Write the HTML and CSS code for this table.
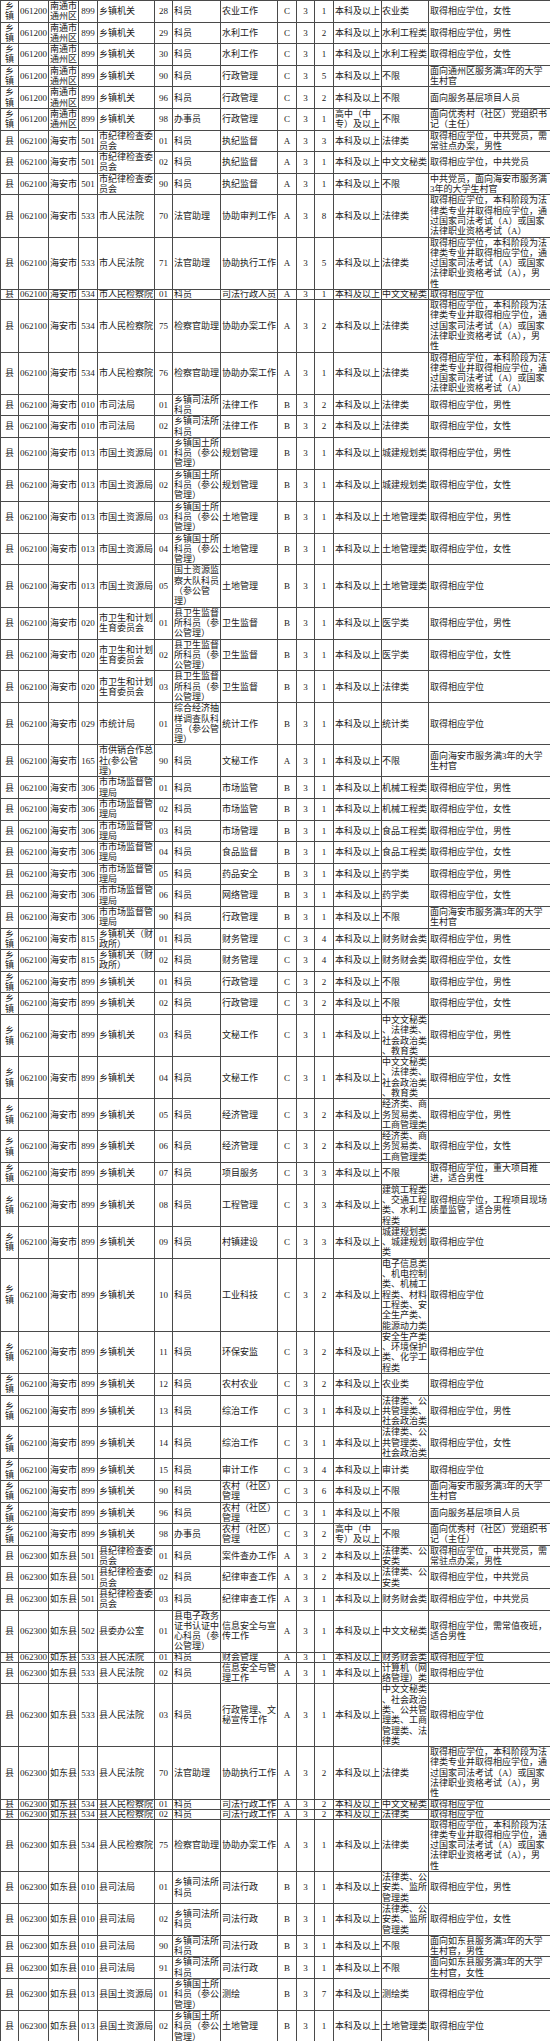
FILE: index.html
```html
<!DOCTYPE html>
<html lang="zh-CN">
<head>
<meta charset="utf-8">
<title>职位表</title>
<link rel="stylesheet" href="styles.css">
</head>
<body>
<table class="sheet">
<colgroup>
<col class="w1"><col class="w2"><col class="w3"><col class="w4"><col class="w5"><col class="w6"><col class="w7"><col class="w8"><col class="w9"><col class="w10"><col class="w11"><col class="w12"><col class="w13"><col class="w14">
</colgroup>
<tbody>
<tr><td>乡<br>镇</td><td>061200</td><td>南通市<br>通州区</td><td>899</td><td>乡镇机关</td><td>28</td><td>科员</td><td>农业工作</td><td>C</td><td>3</td><td>1</td><td>本科及以上</td><td>农业类</td><td>取得相应学位，女性</td></tr>
<tr><td>乡<br>镇</td><td>061200</td><td>南通市<br>通州区</td><td>899</td><td>乡镇机关</td><td>29</td><td>科员</td><td>水利工作</td><td>C</td><td>3</td><td>2</td><td>本科及以上</td><td>水利工程类</td><td>取得相应学位，男性</td></tr>
<tr><td>乡<br>镇</td><td>061200</td><td>南通市<br>通州区</td><td>899</td><td>乡镇机关</td><td>30</td><td>科员</td><td>水利工作</td><td>C</td><td>3</td><td>1</td><td>本科及以上</td><td>水利工程类</td><td>取得相应学位，女性</td></tr>
<tr><td>乡<br>镇</td><td>061200</td><td>南通市<br>通州区</td><td>899</td><td>乡镇机关</td><td>90</td><td>科员</td><td>行政管理</td><td>C</td><td>3</td><td>5</td><td>本科及以上</td><td>不限</td><td>面向通州区服务满3年的大学<br>生村官</td></tr>
<tr><td>乡<br>镇</td><td>061200</td><td>南通市<br>通州区</td><td>899</td><td>乡镇机关</td><td>96</td><td>科员</td><td>行政管理</td><td>C</td><td>3</td><td>2</td><td>本科及以上</td><td>不限</td><td>面向服务基层项目人员</td></tr>
<tr><td>乡<br>镇</td><td>061200</td><td>南通市<br>通州区</td><td>899</td><td>乡镇机关</td><td>98</td><td>办事员</td><td>行政管理</td><td>C</td><td>3</td><td>1</td><td>高中（中<br>专）及以上</td><td>不限</td><td>面向优秀村（社区）党组织书<br>记（主任）</td></tr>
<tr><td>县</td><td>062100</td><td>海安市</td><td>501</td><td>市纪律检查委<br>员会</td><td>01</td><td>科员</td><td>执纪监督</td><td>A</td><td>3</td><td>3</td><td>本科及以上</td><td>法律类</td><td>取得相应学位，中共党员，需<br>常驻点办案，男性</td></tr>
<tr><td>县</td><td>062100</td><td>海安市</td><td>501</td><td>市纪律检查委<br>员会</td><td>02</td><td>科员</td><td>执纪监督</td><td>A</td><td>3</td><td>1</td><td>本科及以上</td><td>中文文秘类</td><td>取得相应学位，中共党员</td></tr>
<tr><td>县</td><td>062100</td><td>海安市</td><td>501</td><td>市纪律检查委<br>员会</td><td>90</td><td>科员</td><td>执纪监督</td><td>A</td><td>3</td><td>1</td><td>本科及以上</td><td>不限</td><td>中共党员，面向海安市服务满<br>3年的大学生村官</td></tr>
<tr><td>县</td><td>062100</td><td>海安市</td><td>533</td><td>市人民法院</td><td>70</td><td>法官助理</td><td>协助审判工作</td><td>A</td><td>3</td><td>8</td><td>本科及以上</td><td>法律类</td><td>取得相应学位，本科阶段为法<br>律类专业并取得相应学位，通<br>过国家司法考试（A）或国家<br>法律职业资格考试（A）</td></tr>
<tr><td>县</td><td>062100</td><td>海安市</td><td>533</td><td>市人民法院</td><td>71</td><td>法官助理</td><td>协助执行工作</td><td>A</td><td>3</td><td>5</td><td>本科及以上</td><td>法律类</td><td>取得相应学位，本科阶段为法<br>律类专业并取得相应学位，通<br>过国家司法考试（A）或国家<br>法律职业资格考试（A），男<br>性</td></tr>
<tr class="thin"><td>县</td><td>062100</td><td>海安市</td><td>534</td><td>市人民检察院</td><td>01</td><td>科员</td><td>司法行政人员</td><td>A</td><td>3</td><td>1</td><td>本科及以上</td><td>中文文秘类</td><td>取得相应学位</td></tr>
<tr><td>县</td><td>062100</td><td>海安市</td><td>534</td><td>市人民检察院</td><td>75</td><td>检察官助理</td><td>协助办案工作</td><td>A</td><td>3</td><td>2</td><td>本科及以上</td><td>法律类</td><td>取得相应学位，本科阶段为法<br>律类专业并取得相应学位，通<br>过国家司法考试（A）或国家<br>法律职业资格考试（A），男<br>性</td></tr>
<tr><td>县</td><td>062100</td><td>海安市</td><td>534</td><td>市人民检察院</td><td>76</td><td>检察官助理</td><td>协助办案工作</td><td>A</td><td>3</td><td>1</td><td>本科及以上</td><td>法律类</td><td>取得相应学位，本科阶段为法<br>律类专业并取得相应学位，通<br>过国家司法考试（A）或国家<br>法律职业资格考试（A）</td></tr>
<tr><td>县</td><td>062100</td><td>海安市</td><td>010</td><td>市司法局</td><td>01</td><td>乡镇司法所<br>科员</td><td>法律工作</td><td>B</td><td>3</td><td>2</td><td>本科及以上</td><td>法律类</td><td>取得相应学位，男性</td></tr>
<tr><td>县</td><td>062100</td><td>海安市</td><td>010</td><td>市司法局</td><td>02</td><td>乡镇司法所<br>科员</td><td>法律工作</td><td>B</td><td>3</td><td>2</td><td>本科及以上</td><td>法律类</td><td>取得相应学位，女性</td></tr>
<tr><td>县</td><td>062100</td><td>海安市</td><td>013</td><td>市国土资源局</td><td>01</td><td>乡镇国土所<br>科员（参公<br>管理）</td><td>规划管理</td><td>B</td><td>3</td><td>1</td><td>本科及以上</td><td>城建规划类</td><td>取得相应学位，男性</td></tr>
<tr><td>县</td><td>062100</td><td>海安市</td><td>013</td><td>市国土资源局</td><td>02</td><td>乡镇国土所<br>科员（参公<br>管理）</td><td>规划管理</td><td>B</td><td>3</td><td>1</td><td>本科及以上</td><td>城建规划类</td><td>取得相应学位，女性</td></tr>
<tr><td>县</td><td>062100</td><td>海安市</td><td>013</td><td>市国土资源局</td><td>03</td><td>乡镇国土所<br>科员（参公<br>管理）</td><td>土地管理</td><td>B</td><td>3</td><td>1</td><td>本科及以上</td><td>土地管理类</td><td>取得相应学位，男性</td></tr>
<tr><td>县</td><td>062100</td><td>海安市</td><td>013</td><td>市国土资源局</td><td>04</td><td>乡镇国土所<br>科员（参公<br>管理）</td><td>土地管理</td><td>B</td><td>3</td><td>1</td><td>本科及以上</td><td>土地管理类</td><td>取得相应学位，女性</td></tr>
<tr><td>县</td><td>062100</td><td>海安市</td><td>013</td><td>市国土资源局</td><td>05</td><td>国土资源监<br>察大队科员<br>（参公管<br>理）</td><td>土地管理</td><td>B</td><td>3</td><td>1</td><td>本科及以上</td><td>土地管理类</td><td>取得相应学位</td></tr>
<tr><td>县</td><td>062100</td><td>海安市</td><td>020</td><td>市卫生和计划<br>生育委员会</td><td>01</td><td>县卫生监督<br>所科员（参<br>公管理）</td><td>卫生监督</td><td>B</td><td>3</td><td>1</td><td>本科及以上</td><td>医学类</td><td>取得相应学位，男性</td></tr>
<tr><td>县</td><td>062100</td><td>海安市</td><td>020</td><td>市卫生和计划<br>生育委员会</td><td>02</td><td>县卫生监督<br>所科员（参<br>公管理）</td><td>卫生监督</td><td>B</td><td>3</td><td>1</td><td>本科及以上</td><td>医学类</td><td>取得相应学位，女性</td></tr>
<tr><td>县</td><td>062100</td><td>海安市</td><td>020</td><td>市卫生和计划<br>生育委员会</td><td>03</td><td>县卫生监督<br>所科员（参<br>公管理）</td><td>卫生监督</td><td>B</td><td>3</td><td>1</td><td>本科及以上</td><td>法律类</td><td>取得相应学位</td></tr>
<tr><td>县</td><td>062100</td><td>海安市</td><td>029</td><td>市统计局</td><td>01</td><td>综合经济抽<br>样调查队科<br>员（参公管<br>理）</td><td>统计工作</td><td>B</td><td>3</td><td>1</td><td>本科及以上</td><td>统计类</td><td>取得相应学位</td></tr>
<tr><td>县</td><td>062100</td><td>海安市</td><td>165</td><td>市供销合作总<br>社(参公管<br>理)</td><td>90</td><td>科员</td><td>文秘工作</td><td>A</td><td>3</td><td>1</td><td>本科及以上</td><td>不限</td><td>面向海安市服务满3年的大学<br>生村官</td></tr>
<tr><td>县</td><td>062100</td><td>海安市</td><td>306</td><td>市市场监督管<br>理局</td><td>01</td><td>科员</td><td>市场监管</td><td>B</td><td>3</td><td>1</td><td>本科及以上</td><td>机械工程类</td><td>取得相应学位，男性</td></tr>
<tr><td>县</td><td>062100</td><td>海安市</td><td>306</td><td>市市场监督管<br>理局</td><td>02</td><td>科员</td><td>市场监管</td><td>B</td><td>3</td><td>1</td><td>本科及以上</td><td>机械工程类</td><td>取得相应学位，女性</td></tr>
<tr><td>县</td><td>062100</td><td>海安市</td><td>306</td><td>市市场监督管<br>理局</td><td>03</td><td>科员</td><td>市场管理</td><td>B</td><td>3</td><td>1</td><td>本科及以上</td><td>食品工程类</td><td>取得相应学位，男性</td></tr>
<tr><td>县</td><td>062100</td><td>海安市</td><td>306</td><td>市市场监督管<br>理局</td><td>04</td><td>科员</td><td>食品监督</td><td>B</td><td>3</td><td>1</td><td>本科及以上</td><td>食品工程类</td><td>取得相应学位，女性</td></tr>
<tr><td>县</td><td>062100</td><td>海安市</td><td>306</td><td>市市场监督管<br>理局</td><td>05</td><td>科员</td><td>药品安全</td><td>B</td><td>3</td><td>1</td><td>本科及以上</td><td>药学类</td><td>取得相应学位，男性</td></tr>
<tr><td>县</td><td>062100</td><td>海安市</td><td>306</td><td>市市场监督管<br>理局</td><td>06</td><td>科员</td><td>网络管理</td><td>B</td><td>3</td><td>1</td><td>本科及以上</td><td>药学类</td><td>取得相应学位，女性</td></tr>
<tr><td>县</td><td>062100</td><td>海安市</td><td>306</td><td>市市场监督管<br>理局</td><td>90</td><td>科员</td><td>行政管理</td><td>B</td><td>3</td><td>1</td><td>本科及以上</td><td>不限</td><td>面向海安市服务满3年的大学<br>生村官</td></tr>
<tr><td>乡<br>镇</td><td>062100</td><td>海安市</td><td>815</td><td>乡镇机关（财<br>政所）</td><td>01</td><td>科员</td><td>财务管理</td><td>C</td><td>3</td><td>4</td><td>本科及以上</td><td>财务财会类</td><td>取得相应学位，男性</td></tr>
<tr><td>乡<br>镇</td><td>062100</td><td>海安市</td><td>815</td><td>乡镇机关（财<br>政所）</td><td>02</td><td>科员</td><td>财务管理</td><td>C</td><td>3</td><td>4</td><td>本科及以上</td><td>财务财会类</td><td>取得相应学位，女性</td></tr>
<tr><td>乡<br>镇</td><td>062100</td><td>海安市</td><td>899</td><td>乡镇机关</td><td>01</td><td>科员</td><td>行政管理</td><td>C</td><td>3</td><td>2</td><td>本科及以上</td><td>不限</td><td>取得相应学位，男性</td></tr>
<tr><td>乡<br>镇</td><td>062100</td><td>海安市</td><td>899</td><td>乡镇机关</td><td>02</td><td>科员</td><td>行政管理</td><td>C</td><td>3</td><td>2</td><td>本科及以上</td><td>不限</td><td>取得相应学位，女性</td></tr>
<tr><td>乡<br>镇</td><td>062100</td><td>海安市</td><td>899</td><td>乡镇机关</td><td>03</td><td>科员</td><td>文秘工作</td><td>C</td><td>3</td><td>1</td><td>本科及以上</td><td>中文文秘类<br>、法律类、<br>社会政治类<br>、教育类</td><td>取得相应学位，男性</td></tr>
<tr><td>乡<br>镇</td><td>062100</td><td>海安市</td><td>899</td><td>乡镇机关</td><td>04</td><td>科员</td><td>文秘工作</td><td>C</td><td>3</td><td>1</td><td>本科及以上</td><td>中文文秘类<br>、法律类、<br>社会政治类<br>、教育类</td><td>取得相应学位，女性</td></tr>
<tr><td>乡<br>镇</td><td>062100</td><td>海安市</td><td>899</td><td>乡镇机关</td><td>05</td><td>科员</td><td>经济管理</td><td>C</td><td>3</td><td>2</td><td>本科及以上</td><td>经济类、商<br>务贸易类、<br>工商管理类</td><td>取得相应学位，男性</td></tr>
<tr><td>乡<br>镇</td><td>062100</td><td>海安市</td><td>899</td><td>乡镇机关</td><td>06</td><td>科员</td><td>经济管理</td><td>C</td><td>3</td><td>2</td><td>本科及以上</td><td>经济类、商<br>务贸易类、<br>工商管理类</td><td>取得相应学位，女性</td></tr>
<tr><td>乡<br>镇</td><td>062100</td><td>海安市</td><td>899</td><td>乡镇机关</td><td>07</td><td>科员</td><td>项目服务</td><td>C</td><td>3</td><td>3</td><td>本科及以上</td><td>不限</td><td>取得相应学位，重大项目推<br>进，适合男性</td></tr>
<tr><td>乡<br>镇</td><td>062100</td><td>海安市</td><td>899</td><td>乡镇机关</td><td>08</td><td>科员</td><td>工程管理</td><td>C</td><td>3</td><td>3</td><td>本科及以上</td><td>建筑工程类<br>、交通工程<br>类、水利工<br>程类</td><td>取得相应学位，工程项目现场<br>质量监管，适合男性</td></tr>
<tr><td>乡<br>镇</td><td>062100</td><td>海安市</td><td>899</td><td>乡镇机关</td><td>09</td><td>科员</td><td>村镇建设</td><td>C</td><td>3</td><td>3</td><td>本科及以上</td><td>城建规划类<br>、城建规划<br>类</td><td>取得相应学位</td></tr>
<tr><td>乡<br>镇</td><td>062100</td><td>海安市</td><td>899</td><td>乡镇机关</td><td>10</td><td>科员</td><td>工业科技</td><td>C</td><td>3</td><td>2</td><td>本科及以上</td><td>电子信息类<br>、机电控制<br>类、机械工<br>程类、材料<br>工程类、安<br>全生产类、<br>能源动力类</td><td>取得相应学位</td></tr>
<tr><td>乡<br>镇</td><td>062100</td><td>海安市</td><td>899</td><td>乡镇机关</td><td>11</td><td>科员</td><td>环保安监</td><td>C</td><td>3</td><td>2</td><td>本科及以上</td><td>安全生产类<br>、环境保护<br>类、化学工<br>程类</td><td>取得相应学位</td></tr>
<tr><td>乡<br>镇</td><td>062100</td><td>海安市</td><td>899</td><td>乡镇机关</td><td>12</td><td>科员</td><td>农村农业</td><td>C</td><td>3</td><td>2</td><td>本科及以上</td><td>农业类</td><td>取得相应学位</td></tr>
<tr><td>乡<br>镇</td><td>062100</td><td>海安市</td><td>899</td><td>乡镇机关</td><td>13</td><td>科员</td><td>综治工作</td><td>C</td><td>3</td><td>1</td><td>本科及以上</td><td>法律类、公<br>共管理类、<br>社会政治类</td><td>取得相应学位，男性</td></tr>
<tr><td>乡<br>镇</td><td>062100</td><td>海安市</td><td>899</td><td>乡镇机关</td><td>14</td><td>科员</td><td>综治工作</td><td>C</td><td>3</td><td>1</td><td>本科及以上</td><td>法律类、公<br>共管理类、<br>社会政治类</td><td>取得相应学位，女性</td></tr>
<tr><td>乡<br>镇</td><td>062100</td><td>海安市</td><td>899</td><td>乡镇机关</td><td>15</td><td>科员</td><td>审计工作</td><td>C</td><td>3</td><td>4</td><td>本科及以上</td><td>审计类</td><td>取得相应学位</td></tr>
<tr><td>乡<br>镇</td><td>062100</td><td>海安市</td><td>899</td><td>乡镇机关</td><td>90</td><td>科员</td><td>农村（社区）<br>管理</td><td>C</td><td>3</td><td>6</td><td>本科及以上</td><td>不限</td><td>面向海安市服务满3年的大学<br>生村官</td></tr>
<tr><td>乡<br>镇</td><td>062100</td><td>海安市</td><td>899</td><td>乡镇机关</td><td>96</td><td>科员</td><td>农村（社区）<br>管理</td><td>C</td><td>3</td><td>1</td><td>本科及以上</td><td>不限</td><td>面向服务基层项目人员</td></tr>
<tr><td>乡<br>镇</td><td>062100</td><td>海安市</td><td>899</td><td>乡镇机关</td><td>98</td><td>办事员</td><td>农村（社区）<br>管理</td><td>C</td><td>3</td><td>2</td><td>高中（中<br>专）及以上</td><td>不限</td><td>面向优秀村（社区）党组织书<br>记（主任）</td></tr>
<tr><td>县</td><td>062300</td><td>如东县</td><td>501</td><td>县纪律检查委<br>员会</td><td>01</td><td>科员</td><td>案件查办工作</td><td>A</td><td>3</td><td>2</td><td>本科及以上</td><td>法律类、公<br>安类</td><td>取得相应学位，中共党员，需<br>常驻点办案，男性</td></tr>
<tr><td>县</td><td>062300</td><td>如东县</td><td>501</td><td>县纪律检查委<br>员会</td><td>02</td><td>科员</td><td>纪律审查工作</td><td>A</td><td>3</td><td>2</td><td>本科及以上</td><td>法律类、公<br>安类</td><td>取得相应学位，中共党员</td></tr>
<tr><td>县</td><td>062300</td><td>如东县</td><td>501</td><td>县纪律检查委<br>员会</td><td>03</td><td>科员</td><td>纪律审查工作</td><td>A</td><td>3</td><td>1</td><td>本科及以上</td><td>财务财会类</td><td>取得相应学位，中共党员</td></tr>
<tr><td>县</td><td>062300</td><td>如东县</td><td>502</td><td>县委办公室</td><td>01</td><td>县电子政务<br>证书认证中<br>心科员（参<br>公管理）</td><td>信息安全与宣<br>传工作</td><td>A</td><td>3</td><td>1</td><td>本科及以上</td><td>中文文秘类</td><td>取得相应学位，需常值夜班，<br>适合男性</td></tr>
<tr class="thin"><td>县</td><td>062300</td><td>如东县</td><td>533</td><td>县人民法院</td><td>01</td><td>科员</td><td>财会管理</td><td>A</td><td>3</td><td>1</td><td>本科及以上</td><td>财务财会类</td><td>取得相应学位</td></tr>
<tr><td>县</td><td>062300</td><td>如东县</td><td>533</td><td>县人民法院</td><td>02</td><td>科员</td><td>信息安全与管<br>理工作</td><td>A</td><td>3</td><td>1</td><td>本科及以上</td><td>计算机（网<br>络管理）类</td><td>取得相应学位</td></tr>
<tr><td>县</td><td>062300</td><td>如东县</td><td>533</td><td>县人民法院</td><td>03</td><td>科员</td><td>行政管理、文<br>秘宣传工作</td><td>A</td><td>3</td><td>1</td><td>本科及以上</td><td>中文文秘类<br>、社会政治<br>类、公共管<br>理类、工商<br>管理类、法<br>律类</td><td>取得相应学位</td></tr>
<tr><td>县</td><td>062300</td><td>如东县</td><td>533</td><td>县人民法院</td><td>70</td><td>法官助理</td><td>协助执行工作</td><td>A</td><td>3</td><td>2</td><td>本科及以上</td><td>法律类</td><td>取得相应学位，本科阶段为法<br>律类专业并取得相应学位，通<br>过国家司法考试（A）或国家<br>法律职业资格考试（A），男<br>性</td></tr>
<tr class="thin"><td>县</td><td>062300</td><td>如东县</td><td>534</td><td>县人民检察院</td><td>01</td><td>科员</td><td>司法行政工作</td><td>A</td><td>3</td><td>2</td><td>本科及以上</td><td>中文文秘类</td><td>取得相应学位</td></tr>
<tr class="thin"><td>县</td><td>062300</td><td>如东县</td><td>534</td><td>县人民检察院</td><td>02</td><td>科员</td><td>司法行政工作</td><td>A</td><td>3</td><td>2</td><td>本科及以上</td><td>法律类</td><td>取得相应学位</td></tr>
<tr><td>县</td><td>062300</td><td>如东县</td><td>534</td><td>县人民检察院</td><td>75</td><td>检察官助理</td><td>协助办案工作</td><td>A</td><td>3</td><td>1</td><td>本科及以上</td><td>法律类</td><td>取得相应学位，本科阶段为法<br>律类专业并取得相应学位，通<br>过国家司法考试（A）或国家<br>法律职业资格考试（A），男<br>性</td></tr>
<tr><td>县</td><td>062300</td><td>如东县</td><td>010</td><td>县司法局</td><td>01</td><td>乡镇司法所<br>科员</td><td>司法行政</td><td>B</td><td>3</td><td>1</td><td>本科及以上</td><td>法律类、公<br>安类、监所<br>管理类</td><td>取得相应学位，男性</td></tr>
<tr><td>县</td><td>062300</td><td>如东县</td><td>010</td><td>县司法局</td><td>02</td><td>乡镇司法所<br>科员</td><td>司法行政</td><td>B</td><td>3</td><td>1</td><td>本科及以上</td><td>法律类、公<br>安类、监所<br>管理类</td><td>取得相应学位，女性</td></tr>
<tr><td>县</td><td>062300</td><td>如东县</td><td>010</td><td>县司法局</td><td>90</td><td>乡镇司法所<br>科员</td><td>司法行政</td><td>B</td><td>3</td><td>1</td><td>本科及以上</td><td>不限</td><td>面向如东县服务满3年的大学<br>生村官，男性</td></tr>
<tr><td>县</td><td>062300</td><td>如东县</td><td>010</td><td>县司法局</td><td>91</td><td>乡镇司法所<br>科员</td><td>司法行政</td><td>B</td><td>3</td><td>1</td><td>本科及以上</td><td>不限</td><td>面向如东县服务满3年的大学<br>生村官，女性</td></tr>
<tr><td>县</td><td>062300</td><td>如东县</td><td>013</td><td>县国土资源局</td><td>01</td><td>乡镇国土所<br>科员（参公<br>管理）</td><td>测绘</td><td>B</td><td>3</td><td>7</td><td>本科及以上</td><td>测绘类</td><td>取得相应学位</td></tr>
<tr><td>县</td><td>062300</td><td>如东县</td><td>013</td><td>县国土资源局</td><td>02</td><td>乡镇国土所<br>科员（参公<br>管理）</td><td>土地管理</td><td>B</td><td>3</td><td>1</td><td>本科及以上</td><td>土地管理类</td><td>取得相应学位</td></tr>
</tbody>
</table>
</body>
</html>
```

FILE: styles.css
```css
html, body {
  margin: 0;
  padding: 0;
  background: #ffffff;
}

.sheet {
  width: 550px;
  border-collapse: collapse;
  table-layout: fixed;
  font-family: "Liberation Serif", "Noto Sans CJK SC", serif;
  font-size: 9px;
  color: #222222;
}

.w1 { width: 18px; }
.w2 { width: 30px; }
.w3 { width: 30px; }
.w4 { width: 19px; }
.w5 { width: 57px; }
.w6 { width: 18px; }
.w7 { width: 48px; }
.w8 { width: 57px; }
.w9 { width: 19px; }
.w10 { width: 18px; }
.w11 { width: 19px; }
.w12 { width: 48px; }
.w13 { width: 47px; }
.w14 { width: 122px; }

.sheet td {
  border: 1px solid #4a4a4a;
  padding: 0 0 0 1px;
  line-height: 10.3px;
  white-space: nowrap;
  overflow: hidden;
  vertical-align: middle;
  text-align: left;
}

.sheet td:nth-child(1),
.sheet td:nth-child(4),
.sheet td:nth-child(6),
.sheet td:nth-child(9),
.sheet td:nth-child(10),
.sheet td:nth-child(11) {
  text-align: center;
  padding: 0;
}

.sheet td:nth-child(13) {
  padding: 0;
}

.sheet .thin td {
  line-height: 9px;
}
```
